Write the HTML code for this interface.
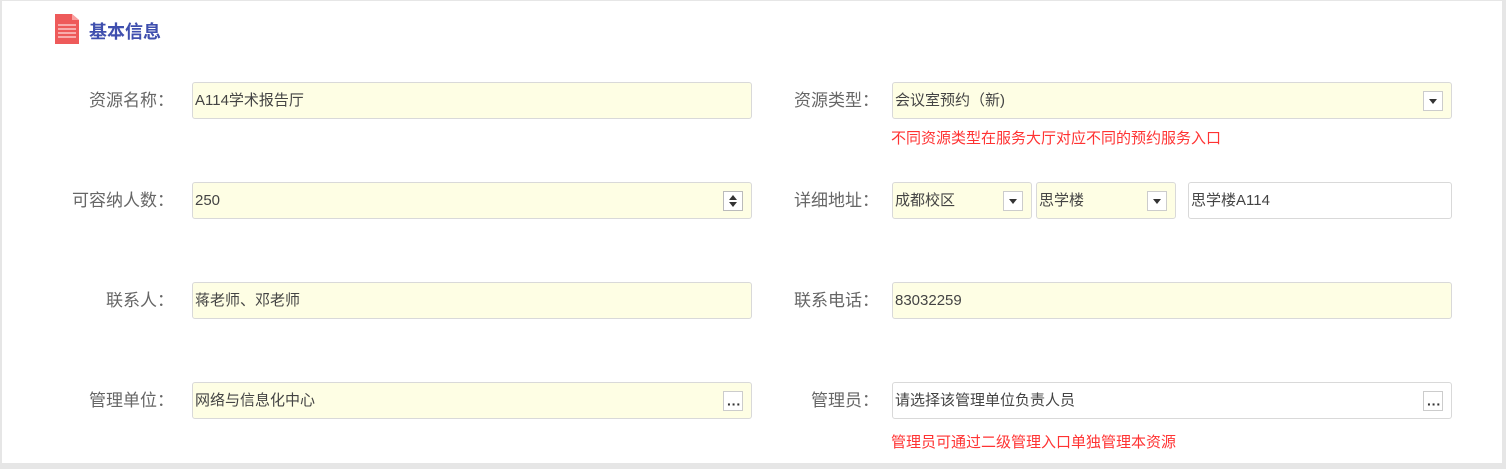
<!DOCTYPE html>
<html><head><meta charset="utf-8"><style>
*{box-sizing:border-box;margin:0;padding:0}
body{width:1506px;height:469px;background:#e6e6e6;font-family:"Liberation Sans","Noto Sans CJK SC",sans-serif;position:relative;overflow:hidden}
.panel{position:absolute;left:2px;top:1px;width:1500px;height:462px;background:#fff}
.abs{position:absolute}
.title{left:89px;top:18px;font-size:18px;font-weight:bold;color:#3f4fae}
.lab{font-size:17px;color:#666;text-align:right;width:160px;height:36px;line-height:38px}
.inp{height:37px;border:1px solid #d9d9d9;border-radius:3px;background:#fefee4;font-size:15px;color:#444;line-height:36px;padding-left:2px}
.w{background:#fff}
.btn{position:absolute;right:8px;top:8px;width:20px;height:20px;border:1px solid #ccc;background:#fff}
.tri{position:absolute;left:5px;top:7px;border-left:4px solid transparent;border-right:4px solid transparent;border-top:5px solid #333}
.dots{position:absolute;left:3px;top:-6px;font-size:14px;color:#333;font-weight:bold;letter-spacing:0}
.red{font-size:15px;color:#f33}
</style></head><body>
<div class="panel"></div>
<svg class="abs" style="left:54px;top:13px" width="26" height="32"><path d="M1 1h17l7 6v24H1z" fill="#ee5a5a"/><path d="M18 1l7 6h-7z" fill="#f9a0a0"/><g stroke="#fdd" stroke-width="1.3"><line x1="4" y1="12" x2="22" y2="12"/><line x1="4" y1="16" x2="22" y2="16"/><line x1="4" y1="20" x2="22" y2="20"/><line x1="4" y1="24" x2="22" y2="24"/></g></svg>
<div class="abs title">基本信息</div>

<div class="abs lab" style="left:14px;top:82px">资源名称：</div>
<div class="abs inp" style="left:192px;top:82px;width:560px">A114学术报告厅</div>
<div class="abs lab" style="left:719px;top:82px">资源类型：</div>
<div class="abs inp" style="left:892px;top:82px;width:560px">会议室预约（新)<div class="btn"><div class="tri"></div></div></div>
<div class="abs red" style="left:891px;top:127px">不同资源类型在服务大厅对应不同的预约服务入口</div>

<div class="abs lab" style="left:14px;top:182px">可容纳人数：</div>
<div class="abs inp" style="left:192px;top:182px;width:560px">250<div class="btn" style="border-color:#bbb"><div style="position:absolute;left:5px;top:3px;border-left:4px solid transparent;border-right:4px solid transparent;border-bottom:5px solid #333"></div><div class="tri" style="top:10px"></div></div></div>
<div class="abs lab" style="left:719px;top:182px">详细地址：</div>
<div class="abs inp" style="left:892px;top:182px;width:140px">成都校区<div class="btn"><div class="tri"></div></div></div>
<div class="abs inp" style="left:1036px;top:182px;width:140px">思学楼<div class="btn"><div class="tri"></div></div></div>
<div class="abs inp w" style="left:1188px;top:182px;width:264px">思学楼A114</div>

<div class="abs lab" style="left:14px;top:282px">联系人：</div>
<div class="abs inp" style="left:192px;top:282px;width:560px">蒋老师、邓老师</div>
<div class="abs lab" style="left:719px;top:282px">联系电话：</div>
<div class="abs inp" style="left:892px;top:282px;width:560px">83032259</div>

<div class="abs lab" style="left:14px;top:382px">管理单位：</div>
<div class="abs inp" style="left:192px;top:382px;width:560px">网络与信息化中心<div class="btn"><div class="dots">···</div></div></div>
<div class="abs lab" style="left:719px;top:382px">管理员：</div>
<div class="abs inp w" style="left:892px;top:382px;width:560px">请选择该管理单位负责人员<div class="btn"><div class="dots">···</div></div></div>
<div class="abs red" style="left:891px;top:431px">管理员可通过二级管理入口单独管理本资源</div>
</body></html>
